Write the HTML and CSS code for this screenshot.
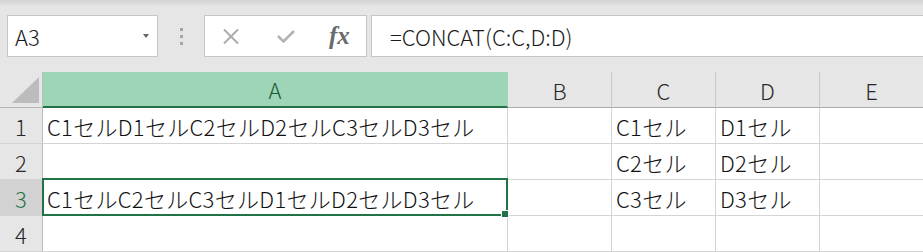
FILE: index.html
```html
<!DOCTYPE html>
<html lang="ja">
<head>
    <meta charset="UTF-8">
    <title>CONCAT</title>
    <link rel="stylesheet" href="styles.css">
</head>
<body>
    <div class="toolbar">
        <div class="name-box">
            <span>A3</span>
            <span class="caret"></span>
        </div>
        <div class="grip"><i></i><i></i><i></i></div>
        <div class="fx-buttons">
            <svg class="icon-cancel" width="16" height="15" viewBox="0 0 16 15">
                <path d="M1 0.5 L15 14.5 M15 0.5 L1 14.5" stroke="#ababab" stroke-width="2" fill="none"/>
            </svg>
            <svg class="icon-enter" width="18" height="13" viewBox="0 0 18 13">
                <path d="M1 6 L6.5 11.5 L17 1" stroke="#b3b3b3" stroke-width="2.6" fill="none"/>
            </svg>
            <span class="fx">fx</span>
        </div>
        <div class="formula">=CONCAT(C:C,D:D)</div>
    </div>

    <div class="sheet">
        <!-- header row -->
        <div class="corner">
            <svg width="28" height="26" viewBox="0 0 28 26"><polygon points="27,0 27,26 0,26" fill="#bcbcbc"/></svg>
        </div>
        <div class="col-head selected">A</div>
        <div class="col-head">B</div>
        <div class="col-head">C</div>
        <div class="col-head">D</div>
        <div class="col-head">E</div>

        <div class="row-head">1</div>
        <div class="cell">C1セルD1セルC2セルD2セルC3セルD3セル</div>
        <div class="cell"></div>
        <div class="cell">C1セル</div>
        <div class="cell">D1セル</div>
        <div class="cell"></div>

        <div class="row-head">2</div>
        <div class="cell"></div>
        <div class="cell"></div>
        <div class="cell">C2セル</div>
        <div class="cell">D2セル</div>
        <div class="cell"></div>

        <div class="row-head selected">3</div>
        <div class="cell active">C1セルC2セルC3セルD1セルD2セルD3セル<span class="fill-handle"></span></div>
        <div class="cell"></div>
        <div class="cell">C3セル</div>
        <div class="cell">D3セル</div>
        <div class="cell"></div>

        <div class="row-head">4</div>
        <div class="cell"></div>
        <div class="cell"></div>
        <div class="cell"></div>
        <div class="cell"></div>
        <div class="cell"></div>
    </div>
</body>
</html>
```

FILE: styles.css
```css
* {
    margin: 0;
    padding: 0;
    box-sizing: border-box;
}

body {
    width: 923px;
    height: 252px;
    overflow: hidden;
    background: #fff;
    font-family: "Noto Sans CJK JP", "Noto Sans", sans-serif;
    font-weight: 300;
    color: #1a1a1a;
}

/* formula bar */
.toolbar {
    height: 72px;
    display: flex;
    align-items: flex-start;
    padding: 15px 0 0 7px;
    background: linear-gradient(#d2d2d2 0, #e6e6e6 7px);
}

.name-box,
.fx-buttons,
.formula {
    height: 42px;
    background: #fff;
    border: 1px solid #c6c6c6;
    display: flex;
    align-items: center;
}

.name-box {
    width: 151px;
    justify-content: space-between;
    padding: 0 8px 0 7px;
    font-size: 22px;
}

.caret {
    width: 0;
    height: 0;
    border-left: 3.5px solid transparent;
    border-right: 3.5px solid transparent;
    border-top: 4px solid #666;
}

.grip {
    width: 46px;
    height: 42px;
    display: flex;
    flex-direction: column;
    align-items: center;
    justify-content: center;
    gap: 4px;
}

.grip i {
    display: block;
    width: 3px;
    height: 3px;
    background: #a6a6a6;
}

.fx-buttons {
    width: 163px;
    padding-left: 18px;
}

.icon-enter {
    margin-left: 38px;
    margin-top: 1px;
}

.fx {
    margin-left: 34px;
    font-family: "Liberation Serif", serif;
    font-style: italic;
    font-weight: bold;
    font-size: 25px;
    color: #6a6a6a;
}

.formula {
    flex: 1;
    margin-left: 4px;
    margin-right: -20px;
    padding-left: 18px;
    font-size: 22px;
}

/* grid */
.sheet {
    display: grid;
    grid-template-columns: 43px 465px 104px 104px 104px 104px;
    grid-auto-rows: 36px;
    font-size: 22px;
}

.sheet > div {
    display: flex;
    align-items: center;
    white-space: nowrap;
    border-right: 1px solid #d4d4d4;
    border-bottom: 1px solid #d4d4d4;
}

.sheet > .corner {
    background: #e6e6e6;
    border-right: 1px solid #bdbdbd;
    border-bottom: 1px solid #b4b4b4;
    align-items: flex-end;
    padding: 0 0 4px 12px;
}

.sheet > .col-head {
    justify-content: center;
    background: #e6e6e6;
    border-right: 1px solid #c8c8c8;
    border-bottom: 1px solid #ababab;
    color: #262626;
}

.sheet > .col-head.selected {
    background: #9fd5b7;
    border-right-color: #9fd5b7;
    border-bottom: 2px solid #217346;
    color: #1e5c3a;
}

.sheet > .row-head {
    justify-content: center;
    background: #e6e6e6;
    border-right: 1px solid #bdbdbd;
    border-bottom: 1px solid #d4d4d4;
    color: #262626;
}

.sheet > .row-head.selected {
    background: #d2d2d2;
    color: #217346;
}

.sheet > .cell {
    padding-left: 4px;
    letter-spacing: 0.3px;
    color: #111;
}

.sheet > .cell.active {
    position: relative;
}

.cell.active::after {
    content: "";
    position: absolute;
    left: -1px;
    top: -2px;
    right: -1px;
    bottom: -1px;
    border: 2px solid #217346;
}

.fill-handle {
    position: absolute;
    right: -2px;
    bottom: -3px;
    width: 8px;
    height: 8px;
    background: #217346;
    border: 1px solid #fff;
    z-index: 1;
}
```
